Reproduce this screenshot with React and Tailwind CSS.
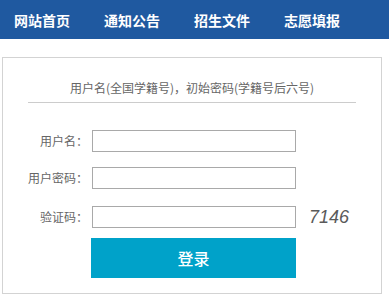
import React from "react";

export default function App() {
  const nav = ["网站首页", "通知公告", "招生文件", "志愿填报"];
  const cjk = { fontFamily: '"Noto Sans CJK SC", "Noto Sans", sans-serif' };
  return (
    <div className="w-[389px] h-[301px] bg-white overflow-hidden" style={cjk}>
      <div className="h-[39px] bg-[#1f59a0] flex items-center pl-[14px] gap-[34px]">
        {nav.map((n) => (
          <span key={n} className="text-white text-[14px] font-bold leading-none">
            {n}
          </span>
        ))}
      </div>
      <div className="mt-[18px] ml-[2px] w-[380px] h-[237px] border border-[#d3d3d3] flex flex-col">
        <div className="mx-[25px] mt-[21px] pb-[5px] border-b border-[#cccccc] text-center text-[12px] leading-[18px] text-[#666666]">
          用户名(全国学籍号)，初始密码(学籍号后六号)
        </div>
        <div className="flex items-center mt-[27px]">
          <span className="w-[85px] text-right text-[12px] text-[#666666] leading-none">用户名：</span>
          <div className="ml-[4px] w-[204px] h-[22px] border border-[#a9a9a9]" />
        </div>
        <div className="flex items-center mt-[15px]">
          <span className="w-[85px] text-right text-[12px] text-[#666666] leading-none">用户密码：</span>
          <div className="ml-[4px] w-[204px] h-[22px] border border-[#a9a9a9]" />
        </div>
        <div className="flex items-center mt-[17px]">
          <span className="w-[85px] text-right text-[12px] text-[#666666] leading-none">验证码：</span>
          <div className="ml-[4px] w-[204px] h-[22px] border border-[#a9a9a9]" />
          <span
            className="ml-[13px] text-[18px] italic text-[#5a5a5a] leading-none"
            style={{ fontFamily: '"Liberation Sans", sans-serif' }}
          >
            7146
          </span>
        </div>
        <div className="ml-[88px] mt-[10px] w-[205px] h-[40px] bg-[#00a2c9] flex items-center justify-center text-white text-[16px] font-medium">
          登录
        </div>
      </div>
    </div>
  );
}
